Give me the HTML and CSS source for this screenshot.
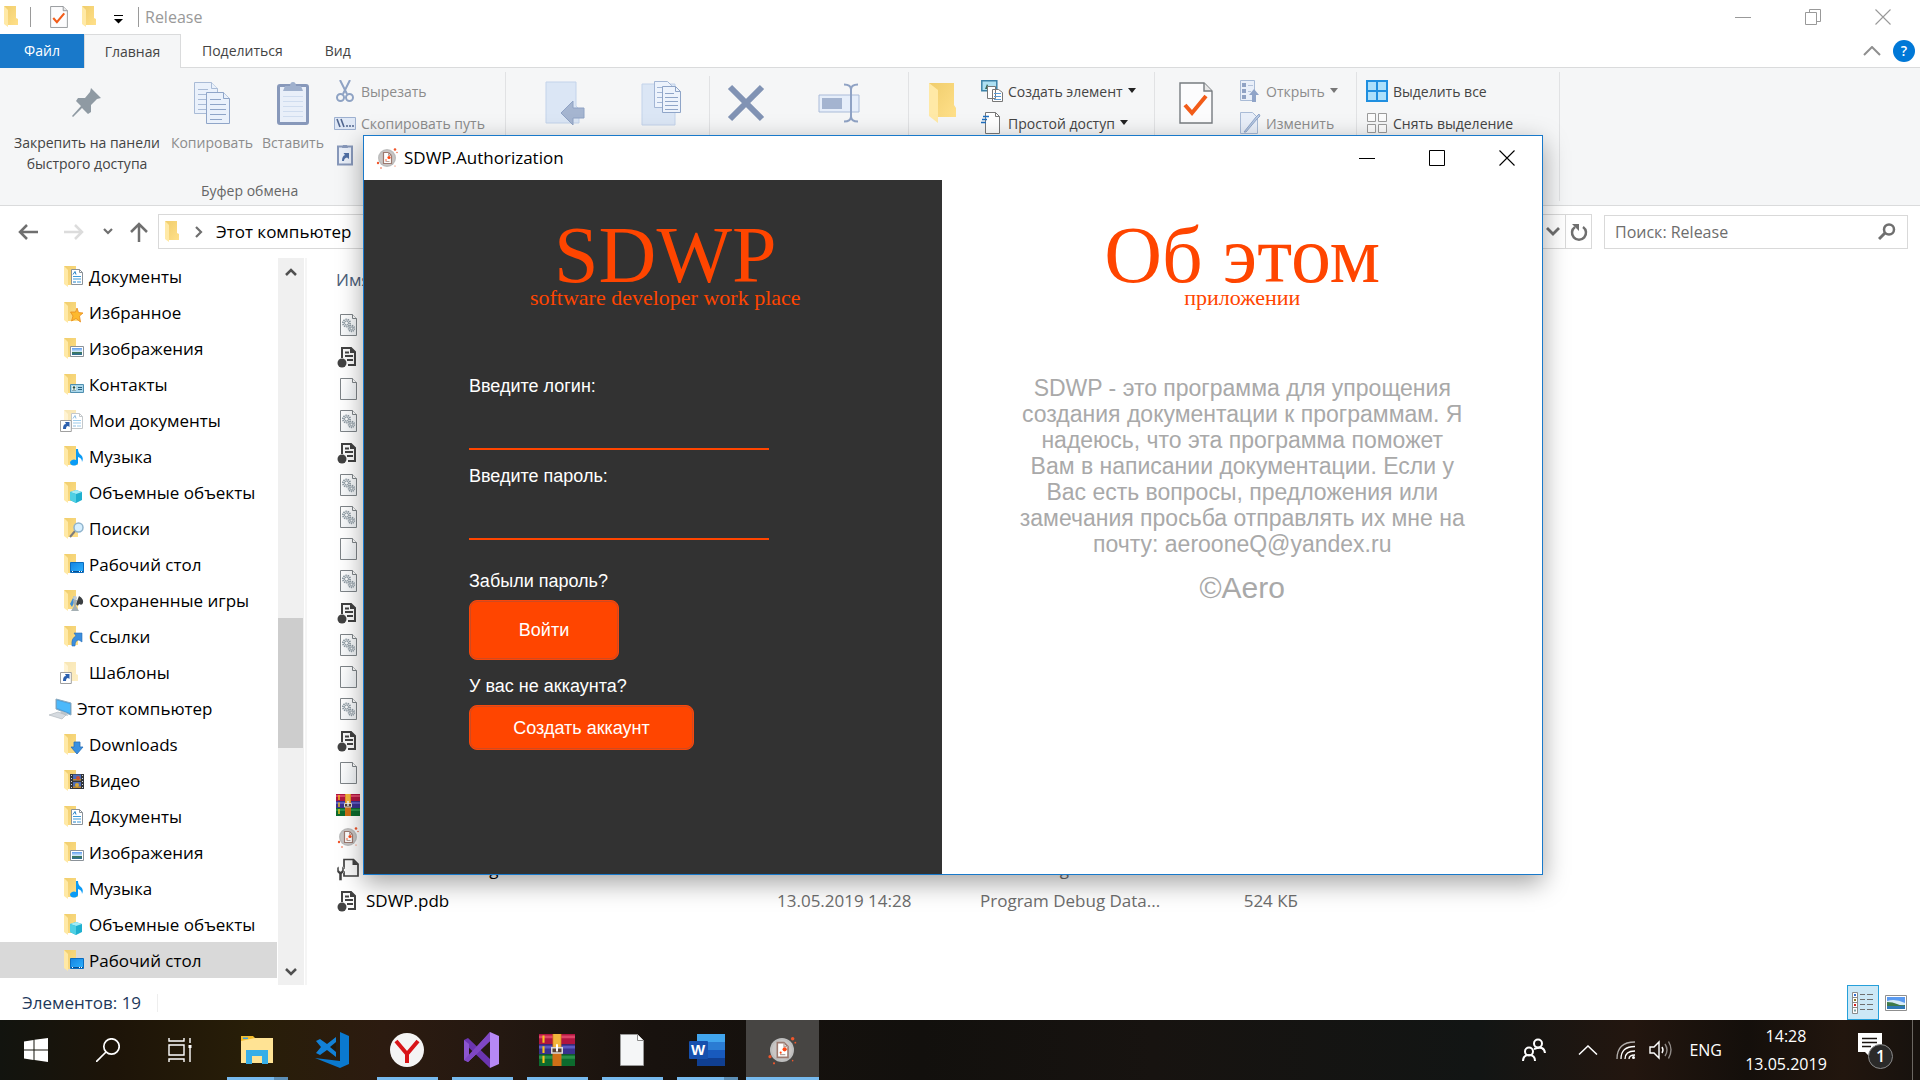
FILE: index.html
```html
<!DOCTYPE html>
<html lang="ru">
<head>
<meta charset="utf-8">
<title>SDWP.Authorization</title>
<link rel="stylesheet" href="styles.css">
</head>
<body>
<svg class="sprite" aria-hidden="true">
  <defs>
    <linearGradient id="gold" x1="0" x2="1" y1="0" y2="1"><stop offset="0" stop-color="#f0cd6c"/><stop offset="1" stop-color="#ffe08a"/></linearGradient>
    <linearGradient id="sky" x1="0" x2="0" y1="0" y2="1"><stop offset="0" stop-color="#5b9bf0"/><stop offset=".5" stop-color="#cfe6f7"/><stop offset=".55" stop-color="#3f7a4a"/><stop offset="1" stop-color="#2f6fa0"/></linearGradient>
    <linearGradient id="screen" x1="0" x2="1" y1="0" y2="1"><stop offset="0" stop-color="#1583e0"/><stop offset="1" stop-color="#2db3ff"/></linearGradient>
    <linearGradient id="paper" x1="0" x2="1" y1="0" y2="1"><stop offset="0" stop-color="#ffffff"/><stop offset="1" stop-color="#eef2f5"/></linearGradient>
    <symbol id="folder" viewBox="0 0 24 24"><path d="M4 1h12v12l2 1v6H8z" fill="url(#gold)"/><path d="M4 1l4 4v17l-4-3z" fill="#ffe9a6"/></symbol>
    <symbol id="doc" viewBox="0 0 24 24"><path d="M11.500 4.500h8l3 3v12h-11z" fill="#fff" stroke="#8b9299"/><path d="M19.500 4.500v3h3" fill="none" stroke="#8b9299"/><path d="M13 11.500h8M13 14h8M17 17h4" stroke="#3f9bd8"/><path d="M13 9.500l2-3 1 3M13 17h3" stroke="#1f7ec4" fill="none"/></symbol>
    <symbol id="star" viewBox="0 0 24 24"><path d="M17 7l1.500 4.500 4.500.5-3.500 3 1 6-4.500-3.500-4.500 2.500 1.500-5-2.500-4h5z" fill="#fdb92e" stroke="#e88b1c" stroke-width=".8"/></symbol>
    <symbol id="image" viewBox="0 0 24 24"><path d="M10.500 9.500h13v10h-13z" fill="#fff" stroke="#8b9299"/><path d="M12 11h10v7H12z" fill="url(#sky)"/></symbol>
    <symbol id="contact" viewBox="0 0 24 24"><path d="M10.500 11.500h13v8h-13z" fill="#a9d6ea" stroke="#4f8fb0"/><path d="M12 13h4v5h-4z" fill="#e9f4e8"/><circle cx="14" cy="14.500" r="1.200" fill="#2a4f4a"/><path d="M12.500 18q1.500-3 3 0M18 14.500h4M18 16.500h4" stroke="#2a5f7a" fill="none"/></symbol>
    <symbol id="note" viewBox="0 0 24 24"><path d="M16 4h2q0 4 3 6 3 3 1 7 0-4-4-5v6a4 3 0 1 1-2-3z" fill="#0a9bf5"/></symbol>
    <symbol id="cube" viewBox="0 0 24 24"><path d="M16 9l6 2v8l-6 3-6-3v-8z" fill="#1fb0cf"/><path d="M16 9l6 2-6 2-6-2z" fill="#a4ecf5"/><path d="M10 11l6 2v9l-6-3z" fill="#4fd0e4"/></symbol>
    <symbol id="lens" viewBox="0 0 24 24"><path d="M10 20l5-6" stroke="#7d7d7d" stroke-width="2"/><circle cx="18.500" cy="10.500" r="4.500" fill="#d6efff" stroke="#8fb3cc" stroke-width="1.500"/></symbol>
    <symbol id="desktop" viewBox="0 0 24 24"><path d="M10.500 9.500h13v10h-13z" fill="url(#screen)" stroke="#0b6cbf"/><path d="M11 18.500h12" stroke="#0a4f90"/><path d="M12 18.500h1m6 0h1m1 0h1" stroke="#fff"/></symbol>
    <symbol id="games" viewBox="0 0 24 24"><path d="M10 15l4-8 2 2-4 9z" fill="#3f8fd8"/><path d="M19 7q5 3 4 7-1 3-4 1-1 3-3 0z" fill="#3c4043"/><circle cx="15" cy="9" r="2" fill="#c5cdd0"/><path d="M13 11h4l-1 6 3 5h-8l3-5z" fill="#a4afb3"/></symbol>
    <symbol id="link" viewBox="0 0 24 24"><path d="M12 21q-1-8 4-10l-2-3h8v9l-3-2q-4 0-4 6z" fill="#3b8ede" stroke="#2a6fb5" stroke-width=".6"/></symbol>
    <symbol id="down" viewBox="0 0 24 24"><path d="M14 9h6v5h3l-6 7-6-7h3z" fill="#3a90e0" stroke="#2a70b8" stroke-width=".8"/></symbol>
    <symbol id="film" viewBox="0 0 24 24"><path d="M10 5h14v15H10z" fill="#33363a"/><path d="M13 5.500h8v6h-8zM13 13h8v6h-8z" fill="#4c6cb8"/><path d="M13 10h8v1.500h-8zM13 17.500h8V19h-8z" fill="#c28a2a"/><circle cx="18" cy="9" r="2" fill="#c94f35"/><circle cx="17" cy="16" r="2" fill="#d6a838"/><path d="M11.500 6v13M22.500 6v13" stroke="#d8d8d8" stroke-dasharray="1 2"/></symbol>
    <symbol id="shortcut" viewBox="0 0 24 24"><path d="M.5 11.500h10.800v11H.5z" fill="#fff" stroke="#a0a0a0"/><path d="M3 20q0-5 3-5l-1-2h4.500v5l-1.500-1q-2 0-2 3z" fill="#2b5fae"/></symbol>
    <symbol id="computer" viewBox="0 0 24 24"><path d="M8 2l15 4v12L8 12z" fill="#4a9fdd" stroke="#8aa9bd"/><path d="M9 3.500l13 3.500v9L9 11z" fill="#4cb9fb"/><path d="M13 14l6 2 1 3-8-2z" fill="#bcc6cd"/><path d="M1 18l9-3 8 3-4 4z" fill="#d6dbe0" stroke="#a9b2b8" stroke-width=".6"/></symbol>
    <symbol id="f-blank" viewBox="0 0 24 24"><path d="M4.500 1.500h12l4 4v17h-16z" fill="url(#paper)" stroke="#7e8488"/><path d="M16.500 1.500v4h4" fill="#fff" stroke="#7e8488"/></symbol>
    <symbol id="f-gear" viewBox="0 0 24 24"><use href="#f-blank"/><g fill="none" stroke="#8d9aa3"><circle cx="10.500" cy="10" r="3.600" stroke-width="1.800" stroke-dasharray="1.400 .8"/><circle cx="10.500" cy="10" r="2"/><circle cx="15.500" cy="15.500" r="2.800" stroke-width="1.800" stroke-dasharray="1.200 .7"/><circle cx="15.500" cy="15.500" r="1.300"/></g></symbol>
    <symbol id="f-pdb" viewBox="0 0 24 24"><path d="M6 13V3h9l4 4v13h-7" fill="#fafafa" stroke="#424242" stroke-width="2"/><path d="M14 2l6 6h-6z" fill="#424242"/><path d="M9 7.500h4M9 11h8M11 15h6" stroke="#424242" stroke-width="2"/><circle cx="6" cy="18" r="4.500" fill="#424242"/></symbol>
    <symbol id="f-config" viewBox="0 0 24 24"><path d="M8 12V2.500h9.500L22 7v12H8v-5" fill="#fafafa" stroke="#424242" stroke-width="1.700"/><path d="M16.500 2l6 6h-6z" fill="#424242"/><path d="M1 10.500l2-1v4l1.500 1L6 13.500v-4l2 1v4.500L6 17v6.500H3V17l-2-2z" fill="#424242" stroke="#fafafa" stroke-width=".5"/></symbol>
    <symbol id="rar" viewBox="0 0 24 24"><path d="M0 1h24v7H0z" fill="#b01540"/><path d="M0 2h24v2H0z" fill="#dc4468"/><path d="M0 8h24v7H0z" fill="#39318f"/><path d="M0 9h24v2H0z" fill="#5d5ac0"/><path d="M0 15h24v8H0z" fill="#0c6b2e"/><path d="M0 16h24v2H0z" fill="#2a9049"/><path d="M3 2v5M3 9.500v4.500M3 16v5" stroke="#f7c41c" stroke-width="1.400"/><path d="M9 1h6v22H9z" fill="#cf6f17"/><path d="M9.500 1h5v9h-5z" fill="#f2b63c"/><path d="M8.500 10.500h7V14h-7z" fill="#5a4030" stroke="#d8d8d8"/><path d="M12 8v5" stroke="#fff" stroke-width="1.300"/></symbol>
    <symbol id="sdwp" viewBox="0 0 24 24"><circle cx="12" cy="12" r="9" fill="#bdbdbd"/><circle cx="12" cy="12" r="7.500" fill="#c9c6c5"/><path d="M8.500 6.500h5l3 3v8h-8z" fill="#fff" stroke="#9c7a70" stroke-width="1.200"/><path d="M13.500 6.500v3h3M10.500 15.500h4" stroke="#b6a49e" fill="none"/><circle cx="14" cy="11.500" r="1.600" fill="#ff4713"/><circle cx="11" cy="14" r=".8" fill="#ff4713"/><circle cx="20" cy="3.500" r="1.300" fill="#f0562c"/><circle cx="22" cy="6.500" r=".7" fill="#f0562c"/><circle cx="3" cy="17" r="1.200" fill="#f0562c"/><circle cx="6" cy="22" r=".8" fill="#f0562c"/><circle cx="20" cy="20" r=".6" fill="#f0562c"/></symbol>
    <symbol id="checkdoc" viewBox="0 0 34 42"><path d="M1 1h24l8 8v32H1z" fill="#fcfcfd" stroke="#777c80" stroke-width="1.400"/><path d="M25 1v8h8" fill="#e8e8e8" stroke="#777c80" stroke-width="1.400"/><path d="M6 23l7 8 14-17" fill="none" stroke="#f25c19" stroke-width="4"/></symbol>
    <symbol id="caret" viewBox="0 0 8 5"><path d="M0 0h8L4 5z" fill="currentColor"/></symbol>
    <symbol id="minus" viewBox="0 0 16 16"><path d="M0 8.500h16" stroke="currentColor"/></symbol>
    <symbol id="cross" viewBox="0 0 16 16"><path d="M.5.5l15 15M15.500.5l-15 15" stroke="currentColor" stroke-width="1.100"/></symbol>
  </defs>
</svg>

<main class="explorer">
  <header class="titlebar">
    <svg class="i24"><use href="#folder"/></svg>
    <span class="rule"></span>
    <button class="bare" aria-label="Свойства"><svg class="quick"><use href="#checkdoc"/></svg></button>
    <button class="bare" aria-label="Новая папка"><svg class="i24"><use href="#folder"/></svg></button>
    <button class="bare quick-menu" aria-label="Настройка панели"><svg width="9" height="9" viewBox="0 0 9 9"><path d="M0 .5h9" stroke="#000"/><path d="M0 4h9L4.500 8.500z"/></svg></button>
    <span class="rule"></span>
    <span class="wintitle">Release</span>
    <span class="controls grey">
      <button class="bare" aria-label="Свернуть"><svg class="i16"><use href="#minus"/></svg></button>
      <button class="bare" aria-label="Восстановить"><svg class="i16" viewBox="0 0 16 16" fill="none" stroke="currentColor"><path d="M.5 3.500h11v12H.5zM4.500 3V.5h11v12h-3.500"/></svg></button>
      <button class="bare" aria-label="Закрыть"><svg class="i16"><use href="#cross"/></svg></button>
    </span>
  </header>

  <nav class="tabs">
    <button class="tab file">Файл</button>
    <button class="tab active">Главная</button>
    <button class="tab share">Поделиться</button>
    <button class="tab view">Вид</button>
    <span class="help">
      <button class="bare" aria-label="Свернуть ленту"><svg width="18" height="10" viewBox="0 0 18 10"><path d="M1 9l8-8 8 8" fill="none" stroke="#8f8f8f" stroke-width="2"/></svg></button>
      <button class="question" aria-label="Справка">?</button>
    </span>
  </nav>

  <section class="ribbon">
    <div class="group clipboard">
      <div class="tools">
        <button class="big pin"><svg width="32" height="44" viewBox="0 0 32 44"><path d="M20 7l10 10-4 1-6 6v7l-3 2-6-6-9 9-1-1 9-10-5-5 2-3h7l5-6z" fill="#8f9aa3"/></svg><span>Закрепить на панели<br>быстрого доступа</span></button>
        <button class="big copy off"><svg width="38" height="44" viewBox="0 0 38 44"><g fill="#eaf1fb" stroke="#a9bbd6"><path d="M1.500 1.500h17l6 6v25h-23z"/><path d="M18.500 1.500v6h6M5 8.500h10M5 13.500h12M5 18.500h10M5 23.500h8M5 28.500h8"/></g><g fill="#eaf1fb" stroke="#8fa5c8"><path d="M13.500 11.500h17l6 6v25h-23z"/><path d="M30.500 11.500v6h6M17 18.500h11M17 23.500h16M17 28.500h16M17 33.500h16M17 38.500h12"/></g></svg><span>Копировать</span></button>
        <button class="big paste off"><svg width="32" height="44" viewBox="0 0 32 44"><rect x="1.500" y="4.500" width="29" height="38" rx="1.500" fill="#e9eff9" stroke="#8798ba" stroke-width="3"/><path d="M6 15.500h20M6 20.500h20M6 25.500h20M6 30.500h20M6 35.500h20" stroke="#cfdcef"/><path d="M6 10l2-5h5q0-4 3-4t3 4h5l2 5z" fill="#9fb0cd"/></svg><span>Вставить</span></button>
        <div class="stack">
          <button class="small off"><svg class="i22" viewBox="0 0 22 22" fill="none" stroke="#8fa3c4" stroke-width="2"><path d="M6 0l7 14M16 0L9 14"/><circle cx="6.500" cy="17.500" r="3.500"/><circle cx="15.500" cy="17.500" r="3.500"/></svg>Вырезать</button>
          <button class="small off"><svg class="i22" viewBox="0 0 22 22"><path d="M.5 5.500h21v12H.5z" fill="#dfe8f6" stroke="#9db0d0"/><path d="M3 7l3 8M7 7l3 8M12 14h2M15 14h2M18 14h2" stroke="#51668f" stroke-width="1.600"/></svg>Скопировать путь</button>
          <button class="small off" aria-label="Вставить ярлык"><svg class="i22" viewBox="0 0 22 22"><path d="M4 2.500h14v18H4z" fill="#e9eff9" stroke="#8798ba" stroke-width="2"/><path d="M8 4l1-3h4l1 3z" fill="#8798ba"/><path d="M8 17q0-5 3-6L9.500 9H15v6l-2-1.500q-3 .5-3 3.500z" fill="#4f6fa5"/></svg></button>
        </div>
      </div>
      <span class="caption">Буфер обмена</span>
    </div>
    <div class="group organize">
      <button class="bare pic" aria-label="Переместить в"><svg width="40" height="44" viewBox="0 0 40 44"><path d="M1 1h30v24l3 3v14H1z" fill="#dbe6f5" stroke="#c3d3ea"/><path d="M16 32l12-12v7h11v10H28v7z" fill="#a5b5d0" stroke="#8fa2c4"/></svg></button>
      <button class="bare pic" aria-label="Копировать в"><svg width="40" height="46" viewBox="0 0 40 46"><path d="M1 4h33v41H1z" fill="#dbe6f5" stroke="#c3d3ea"/><path d="M13.500 1.500h13l4 4v22h-17z" fill="#edf3fc" stroke="#a3b6d5"/><path d="M16 7.500h6M16 12.500h6M16 17.500h6M16 22.500h6" stroke="#a3b6d5"/><path d="M21.500 6.500h13l5 5v21h-18z" fill="#edf3fc" stroke="#8fa5c8"/><path d="M34.500 6.500v5h5M24 13.500h9M24 17.500h13M24 21.500h13M24 25.500h13M24 29.500h13" stroke="#8fa5c8" fill="none"/></svg></button>
      <span class="vr"></span>
      <button class="bare pic del" aria-label="Удалить"><svg width="38" height="38" viewBox="0 0 38 38"><path d="M3 3l32 32M35 3L3 35" stroke="#8193b4" stroke-width="6"/></svg></button>
      <button class="bare pic ren" aria-label="Переименовать"><svg width="42" height="40" viewBox="0 0 42 40"><path d="M1 12h40v17H1z" fill="#e6eefa" stroke="#aabbd8"/><path d="M4 15h20v11H4z" fill="#a4b4d0"/><path d="M26 1.500q7 0 7 5v27q0 5-7 5M40 1.500q-7 0-7 5M33 33.500q0 5 7 5" fill="none" stroke="#8fa2c4" stroke-width="2"/></svg></button>
    </div>
    <div class="group create">
      <button class="bare pic" aria-label="Новая папка"><svg width="30" height="42" viewBox="0 0 30 42"><path d="M1 1h25v22l2 3v9H10z" fill="url(#gold)"/><path d="M1 1l9 7v33l-9-7z" fill="#ffe9a6"/></svg></button>
      <div class="stack">
        <button class="small"><svg class="i22" viewBox="0 0 22 22"><path d="M.8.8h15v10H.8z" fill="#aee0f2" stroke="#3d82a8" stroke-width="1.500"/><path d="M4 9l2-5 3 5z" fill="#3a6a5c"/><path d="M6.500 6.500h8v12h-8zM11.500 9.500h6l4 3v9h-10z" fill="#fff" stroke="#777"/><path d="M13 13.500h7M13 16.500h7M13 19.500h7" stroke="#5a9bd5"/></svg>Создать элемент<svg class="caret"><use href="#caret"/></svg></button>
        <button class="small"><svg class="i22" viewBox="0 0 22 22"><path d="M4.500.5h10l4 4v17h-14z" fill="#fff" stroke="#777"/><path d="M14.500.5v4h4" fill="none" stroke="#777"/><path d="M2 4.500h6M1 7.500h5M0 10.500h5" stroke="#1f6fc0" stroke-width="1.500"/></svg>Простой доступ<svg class="caret"><use href="#caret"/></svg></button>
      </div>
    </div>
    <div class="group open">
      <button class="bare pic" aria-label="Свойства"><svg width="34" height="42"><use href="#checkdoc"/></svg></button>
      <div class="stack">
        <button class="small off"><svg class="i22" viewBox="0 0 22 22"><path d="M1.500.5h14v20h-14z" fill="#e9eff9" stroke="#a9bbd6"/><path d="M3 3h4v4H3zM3 9h4v4H3zM3 15h4v4H3z" fill="#8fa2c4"/><path d="M9 5.500h5M9 11.500h3" stroke="#b5c4dc"/><path d="M15 9l5 6h-3v7h-4v-7h-3z" fill="#90a4c8"/></svg>Открыть<svg class="caret"><use href="#caret"/></svg></button>
        <button class="small off"><svg class="i22" viewBox="0 0 22 22"><path d="M1.500.5h12l5 5v16h-17z" fill="#e9eff9" stroke="#a9bbd6"/><path d="M5 20L17 5l3-3 1 2-3 3L7 20z" fill="#b9cae4" stroke="#8fa5c8"/></svg>Изменить</button>
      </div>
    </div>
    <div class="group select">
      <div class="stack">
        <button class="small"><svg class="i22" viewBox="0 0 22 22"><path d="M1 1h20v20H1zM11 1v20M1 11h20" fill="#ace0fb" stroke="#1f8fe0" stroke-width="2"/></svg>Выделить все</button>
        <button class="small"><svg class="i22" viewBox="0 0 22 22"><path d="M1.500 1.500h8v8h-8zM12.500 1.500h8v8h-8zM1.500 12.500h8v8h-8zM12.500 12.500h8v8h-8z" fill="#fcfcfc" stroke="#9b9b9b"/></svg>Снять выделение</button>
      </div>
    </div>
  </section>

  <section class="address">
    <button class="bare nav" aria-label="Назад"><svg width="20" height="18" viewBox="0 0 20 18"><path d="M9 2L2 9l7 7M2 9h18" fill="none" stroke="#6f6f6f" stroke-width="2.500"/></svg></button>
    <button class="bare nav" aria-label="Вперёд"><svg width="20" height="18" viewBox="0 0 20 18"><path d="M11 2l7 7-7 7M18 9H0" fill="none" stroke="#dcdcdc" stroke-width="2.500"/></svg></button>
    <button class="bare recent" aria-label="Последние"><svg width="10" height="8" viewBox="0 0 10 8"><path d="M1 1l4 4 4-4" fill="none" stroke="#6f6f6f" stroke-width="2.200"/></svg></button>
    <button class="bare up" aria-label="Вверх"><svg width="18" height="20" viewBox="0 0 18 20"><path d="M1 10l8-8 8 8M9 2v18" fill="none" stroke="#6f6f6f" stroke-width="2.500"/></svg></button>
    <div class="path">
      <svg class="i24"><use href="#folder"/></svg>
      <svg class="sep" width="8" height="12" viewBox="0 0 8 12"><path d="M1 1l5 5-5 5" fill="none" stroke="#6f6f6f" stroke-width="2.200"/></svg>
      <a href="#pc">Этот компьютер</a>
      <button class="bare drop" aria-label="История"><svg width="14" height="10" viewBox="0 0 14 10"><path d="M1 1l6 6 6-6" fill="none" stroke="#6f6f6f" stroke-width="2.800"/></svg></button>
      <button class="bare refresh" aria-label="Обновить"><svg width="18" height="18" viewBox="0 0 18 18"><path d="M13 4a7 7 0 1 1-8 0" fill="none" stroke="#6f6f6f" stroke-width="2.500"/><path d="M2 1h7v7z" fill="#6f6f6f"/></svg></button>
    </div>
    <form class="search">
      <input type="text" placeholder="Поиск: Release" aria-label="Поиск">
      <svg width="18" height="18" viewBox="0 0 18 18"><circle cx="11" cy="6.500" r="5" fill="none" stroke="#6f6f6f" stroke-width="2.500"/><path d="M7 10l-6 6" stroke="#6f6f6f" stroke-width="3"/></svg>
    </form>
  </section>

  <div class="content">
    <ul class="tree">
      <li><svg class="i24"><use href="#folder"/><use href="#doc"/></svg>Документы</li>
      <li><svg class="i24"><use href="#folder"/><use href="#star"/></svg>Избранное</li>
      <li><svg class="i24"><use href="#folder"/><use href="#image"/></svg>Изображения</li>
      <li><svg class="i24"><use href="#folder"/><use href="#contact"/></svg>Контакты</li>
      <li><svg class="i24"><g opacity=".5"><use href="#folder"/><use href="#doc"/></g><use href="#shortcut"/></svg>Мои документы</li>
      <li><svg class="i24"><use href="#folder"/><use href="#note"/></svg>Музыка</li>
      <li><svg class="i24"><use href="#folder"/><use href="#cube"/></svg>Объемные объекты</li>
      <li><svg class="i24"><use href="#folder"/><use href="#lens"/></svg>Поиски</li>
      <li><svg class="i24"><use href="#folder"/><use href="#desktop"/></svg>Рабочий стол</li>
      <li><svg class="i24"><use href="#folder"/><use href="#games"/></svg>Сохраненные игры</li>
      <li><svg class="i24"><use href="#folder"/><use href="#link"/></svg>Ссылки</li>
      <li><svg class="i24"><g opacity=".5"><use href="#folder"/></g><use href="#shortcut"/></svg>Шаблоны</li>
      <li class="root"><svg class="i24"><use href="#computer"/></svg>Этот компьютер</li>
      <li><svg class="i24"><use href="#folder"/><use href="#down"/></svg>Downloads</li>
      <li><svg class="i24"><use href="#folder"/><use href="#film"/></svg>Видео</li>
      <li><svg class="i24"><use href="#folder"/><use href="#doc"/></svg>Документы</li>
      <li><svg class="i24"><use href="#folder"/><use href="#image"/></svg>Изображения</li>
      <li><svg class="i24"><use href="#folder"/><use href="#note"/></svg>Музыка</li>
      <li><svg class="i24"><use href="#folder"/><use href="#cube"/></svg>Объемные объекты</li>
      <li class="selected"><svg class="i24"><use href="#folder"/><use href="#desktop"/></svg>Рабочий стол</li>
    </ul>
    <div class="scroll">
      <svg width="12" height="10" viewBox="0 0 12 10"><path d="M1 8l5-5 5 5" fill="none" stroke="#505050" stroke-width="2.500"/></svg>
      <span class="thumb"></span>
      <svg width="12" height="10" viewBox="0 0 12 10"><path d="M1 2l5 5 5-5" fill="none" stroke="#505050" stroke-width="2.500"/></svg>
    </div>
    <div class="files">
      <table>
        <colgroup><col class="w-icon"><col class="w-name"><col class="w-date"><col class="w-type"><col class="w-size"></colgroup>
        <thead><tr><th colspan="5">Имя</th></tr></thead>
        <tbody>
          <tr><td><svg class="i24"><use href="#f-gear"/></svg></td></tr>
          <tr><td><svg class="i24"><use href="#f-pdb"/></svg></td></tr>
          <tr><td><svg class="i24"><use href="#f-blank"/></svg></td></tr>
          <tr><td><svg class="i24"><use href="#f-gear"/></svg></td></tr>
          <tr><td><svg class="i24"><use href="#f-pdb"/></svg></td></tr>
          <tr><td><svg class="i24"><use href="#f-gear"/></svg></td></tr>
          <tr><td><svg class="i24"><use href="#f-gear"/></svg></td></tr>
          <tr><td><svg class="i24"><use href="#f-blank"/></svg></td></tr>
          <tr><td><svg class="i24"><use href="#f-gear"/></svg></td></tr>
          <tr><td><svg class="i24"><use href="#f-pdb"/></svg></td></tr>
          <tr><td><svg class="i24"><use href="#f-gear"/></svg></td></tr>
          <tr><td><svg class="i24"><use href="#f-blank"/></svg></td></tr>
          <tr><td><svg class="i24"><use href="#f-gear"/></svg></td></tr>
          <tr><td><svg class="i24"><use href="#f-pdb"/></svg></td></tr>
          <tr><td><svg class="i24"><use href="#f-blank"/></svg></td></tr>
          <tr><td><svg class="i24"><use href="#rar"/></svg></td></tr>
          <tr><td><svg class="i24"><use href="#sdwp"/></svg></td></tr>
          <tr><td><svg class="i24"><use href="#f-config"/></svg></td><td class="c-name">SDWP.exe.config</td><td>31.12.2018 12:51</td><td>XML Configuration File</td><td class="c-size">1 КБ</td></tr>
          <tr><td><svg class="i24"><use href="#f-pdb"/></svg></td><td class="c-name">SDWP.pdb</td><td>13.05.2019 14:28</td><td>Program Debug Data...</td><td class="c-size">524 КБ</td></tr>
        </tbody>
      </table>
    </div>
  </div>

  <footer class="status">
    <span class="count">Элементов: 19</span>
    <span class="views">
      <button class="bare details" aria-label="Таблица"><svg width="22" height="22" viewBox="0 0 22 22"><path d="M.5.5h5v21h-5zM.5 5.500h5M.5 10.500h5M.5 15.500h5" fill="#fff" stroke="#8a8a8a"/><path d="M2 3h2" stroke="#2f6fd0" stroke-width="2"/><path d="M2 8h2" stroke="#8a7a2a" stroke-width="2"/><path d="M2 13h2" stroke="#d02020" stroke-width="2"/><path d="M2 18.500h2" stroke="#7aa0a0" stroke-width="2"/><path d="M8 2.500h5M15 2.500h6M8 7.500h5M15 7.500h6M8 12.500h5M15 12.500h6M8 17.500h5M15 17.500h6" stroke="#6f6f6f"/></svg></button>
      <button class="bare thumbs" aria-label="Эскизы"><svg width="22" height="16" viewBox="0 0 22 16"><path d="M.5.5h21v15H.5z" fill="#fff" stroke="#8f8f8f"/><path d="M2 2h18v12H2z" fill="#5a9af0"/><path d="M2 6q8-3 18 2v2H2z" fill="#d8ebf8"/><path d="M2 7q6 0 10 2t8 1v1H2z" fill="#3f7a4a"/><path d="M2 11h18v3H2z" fill="#2f78b5"/></svg></button>
    </span>
  </footer>
</main>

<section class="dialog" role="dialog" aria-labelledby="dlg-title">
  <header class="dialog-bar">
    <svg class="i24"><use href="#sdwp"/></svg>
    <span id="dlg-title">SDWP.Authorization</span>
    <span class="controls">
      <button class="bare" aria-label="Свернуть"><svg class="i16"><use href="#minus"/></svg></button>
      <button class="bare" aria-label="Развернуть"><svg class="i16" viewBox="0 0 16 16"><path d="M.5.5h15v15H.5z" fill="none" stroke="currentColor"/></svg></button>
      <button class="bare" aria-label="Закрыть"><svg class="i16"><use href="#cross"/></svg></button>
    </span>
  </header>
  <div class="dialog-body">
    <div class="login">
      <h1>SDWP</h1>
      <p class="sub">software developer work place</p>
      <form>
        <label for="login">Введите логин:</label>
        <input id="login" type="text">
        <label for="password">Введите пароль:</label>
        <input id="password" type="password">
        <a class="forgot" href="#forgot">Забыли пароль?</a>
        <button type="button" class="enter">Войти</button>
        <p class="noacc">У вас не аккаунта?</p>
        <button type="button" class="create-acc">Создать аккаунт</button>
      </form>
    </div>
    <div class="about">
      <h2>Об этом</h2>
      <p class="sub">приложении</p>
      <p class="text">SDWP - это программа для упрощения<br>создания документации к программам. Я<br>надеюсь, что эта программа поможет<br>Вам в написании документации. Если у<br>Вас есть вопросы, предложения или<br>замечания просьба отправлять их мне на<br>почту: aerooneQ@yandex.ru</p>
      <p class="copyright">©Aero</p>
    </div>
  </div>
</section>

<footer class="taskbar">
  <button class="sys" aria-label="Пуск"><svg width="24" height="24" viewBox="0 0 24 24" fill="#fff"><path d="M0 3.500L9.500 2v9.500H0zM10.500 1.800L24 0v11.500H10.500zM0 12.500h9.500V22L0 20.600zM10.500 12.500H24V24l-13.500-1.900z"/></svg></button>
  <button class="sys" aria-label="Поиск"><svg width="24" height="24" viewBox="0 0 24 24" fill="none" stroke="#fff" stroke-width="1.700"><circle cx="15.500" cy="8.500" r="7.700"/><path d="M10 14L0 24"/></svg></button>
  <button class="sys" aria-label="Представление задач"><svg width="24" height="24" viewBox="0 0 24 24" fill="none" stroke="#fff" stroke-width="1.400"><path d="M1 0v3h15V0M1 7h15v10H1zM1 24v-3h15v3M22 0v5M22 10v14"/><path d="M20.500 7h3v3h-3z" fill="#fff" stroke="none"/></svg></button>
  <span class="apps">
    <button class="app run more" aria-label="Проводник"><svg width="34" height="28" viewBox="0 0 34 28"><path d="M1 0h12l3 3v4H1z" fill="#f5bd2c"/><path d="M3 1.500h5v1.500H3z" fill="#3da0e0"/><path d="M1 5l14-3h18v25H1z" fill="#ffe394"/><path d="M6 28V14h22v14h-6v-8H12v8z" fill="#37aee8"/></svg></button>
    <button class="app" aria-label="VS Code"><svg width="36" height="36" viewBox="0 0 36 36"><path d="M26 0l9 4v28l-9 4L1 26l25 3z" fill="#0a79cf"/><path d="M22 5v20l-9-7-7 5-4-2 5-6-5-6 4-2 7 5z" fill="#1280d6"/><path d="M16 15l6-5v10z" fill="#20180e"/></svg></button>
    <button class="app run" aria-label="Яндекс Браузер"><svg width="34" height="34" viewBox="0 0 34 34"><circle cx="17" cy="17" r="17" fill="#f4f4f4"/><path d="M6 8l11 13L28 8M17 19v11" fill="none" stroke="#d81418" stroke-width="4"/></svg></button>
    <button class="app run" aria-label="Visual Studio"><svg width="36" height="36" viewBox="0 0 36 36"><path d="M26 0l9 4v28l-9 4z" fill="#b688f5"/><path d="M0 8l4-2 22 21v9L0 11z" fill="#6b35b0"/><path d="M26 0v9L4 30l-4-2V8l5 4v12z" fill="#8c55cf"/><path d="M26 0v9L4 30l-4-2z" fill="#7f47c4"/></svg></button>
    <button class="app run" aria-label="WinRAR"><svg width="36" height="32" viewBox="0 1 24 22" preserveAspectRatio="none"><use href="#rar" width="24" height="24"/></svg></button>
    <button class="app run" aria-label="Документ"><svg width="24" height="32" viewBox="0 0 24 32"><path d="M.5.5h17l6 6v25H.5z" fill="#f5f6f7" stroke="#999"/><path d="M17.500.5v6h6" fill="#fff" stroke="#888"/></svg></button>
    <button class="app run more" aria-label="Word"><svg width="36" height="34" viewBox="0 0 36 34"><path d="M8 1h28v8H8z" fill="#41a5ee"/><path d="M8 9h28v8H8z" fill="#2b7cd3"/><path d="M8 17h28v8H8z" fill="#185abd"/><path d="M8 25h28v8H8z" fill="#103f91"/><rect y="8" width="19" height="18" rx="1" fill="#1650ad"/><text x="9" y="22" class="w">W</text></svg></button>
    <button class="app run current" aria-label="SDWP"><svg width="32" height="32"><use href="#sdwp"/></svg></button>
  </span>
  <span class="tray">
    <button class="bare people" aria-label="Люди"><svg width="24" height="24" viewBox="0 0 24 24" fill="none" stroke="#fff" stroke-width="2"><circle cx="16" cy="5.500" r="4"/><circle cx="7" cy="13.500" r="4"/><path d="M1 23q0-6 6-6t6 6M12 11q10-4 11 4"/></svg></button>
    <button class="bare chev" aria-label="Скрытые значки"><svg width="20" height="10" viewBox="0 0 20 10"><path d="M1 9.500l9-8.500 9 8.500" fill="none" stroke="#fff" stroke-width="1.500"/></svg></button>
    <button class="bare wifi" aria-label="Сеть"><svg width="20" height="20" viewBox="0 0 20 20" fill="none" stroke="#fff" stroke-width="1.300"><path d="M1 19Q1 2 19 2" opacity=".65"/><path d="M5 19Q5 6.500 19 6.500"/><path d="M9 19q0-8 10-8"/><path d="M13 19q0-4 6-4"/><circle cx="17.500" cy="17.500" r="1.500" fill="#fff" stroke="none"/></svg></button>
    <button class="bare vol" aria-label="Громкость"><svg width="24" height="20" viewBox="0 0 24 20" fill="none" stroke="#fff" stroke-width="1.400"><path d="M1 7h4l5-5v16l-5-5H1z"/><path d="M13 7q2 3 0 6"/><path d="M16 4q4 6 0 12M19.500 1.500q5 8 0 17" opacity=".5"/></svg></button>
    <button class="bare lang">ENG</button>
    <span class="clock">14:28<br>13.05.2019</span>
    <button class="bare notes" aria-label="Уведомления"><svg width="38" height="38" viewBox="0 0 38 38"><path d="M1 2h24v19H13v5l-5-5H1z" fill="#fff"/><path d="M5 7.500h15M5 11.500h15M5 15.500h9" stroke="#1a1410" stroke-width="1.300"/></svg><span class="badge">1</span></button>
    <span class="peek"></span>
  </span>
</footer>
</body>
</html>
```
FILE: styles.css
```css
* { box-sizing: border-box; }

body {
  margin: 0;
  min-height: 100vh;
  display: flex;
  flex-direction: column;
  position: relative;
  background: #fff;
  color: #000;
  font: 17px/24px "Open Sans", "Noto Sans", sans-serif;
}

button, input { font: inherit; color: inherit; }
button { border: 0; background: none; padding: 0; }
svg { display: block; flex: none; }
p, h1, h2, ul { margin: 0; padding: 0; }
.sprite { width: 0; height: 0; position: absolute; }
.i24 { width: 24px; height: 24px; }
.i22 { width: 22px; height: 22px; }
.i16 { width: 16px; height: 16px; }
.bare { display: flex; align-items: center; justify-content: center; }

.explorer { flex: 1; display: flex; flex-direction: column; }

/* title bar */
.titlebar { height: 34px; display: flex; align-items: center; }
.rule { width: 1px; height: 20px; background: #9a9a9a; margin: 0 6px; }
.quick { width: 18px; height: 22px; margin: 0 10px 0 13px; }
.quick-menu { width: 16px; margin: 4px 6px 0 8px; }
.wintitle { color: #999; font-size: 16px; padding-bottom: 1px; }
.controls { margin-left: auto; display: flex; color: #000; }
.controls .bare { width: 70px; height: 32px; }
.controls.grey { color: #999; padding-right: 2px; }

/* ribbon tabs */
.tabs { height: 34px; display: flex; align-items: stretch; border-bottom: 1px solid #dadbdc; font-size: 14px; color: #444; }
.tab { padding: 0 21px; }
.file { width: 84px; padding: 0; background: #1979ca; color: #fff; margin-bottom: -1px; }
.active { width: 97px; padding: 0; background: #f5f6f7; border: solid #dadbdc; border-width: 1px 1px 0; margin-bottom: -1px; }
.help { margin-left: auto; display: flex; align-items: center; gap: 12px; padding-right: 5px; }
.question { width: 22px; height: 22px; border-radius: 50%; background: #0078d7; color: #fff; font-weight: 600; line-height: 20px; }

/* ribbon */
.ribbon { height: 138px; display: flex; background: #f5f6f7; border-bottom: 1px solid #dadbdc; font-size: 14px; line-height: 21px; color: #444; }
.ribbon button { color: inherit; white-space: nowrap; }
.ribbon .off { color: #8c8c8c; }
.group { display: flex; margin: 4px 0; border-right: 1px solid #e1e2e4; }
.tools { display: flex; }
.big { display: flex; flex-direction: column; align-items: center; gap: 7px; padding-top: 9px; justify-content: flex-start; }
.pin { width: 174px; }
.copy { width: 76px; }
.paste { width: 86px; }
.stack { display: flex; flex-direction: column; gap: 10px; padding-top: 8px; }
.small { display: flex; align-items: center; gap: 5px; height: 22px; }
.clipboard { width: 506px; flex-direction: column; justify-content: space-between; }
.clipboard .stack { margin-left: -2px; }
.caption { padding-left: 201px; line-height: 21px; color: #666; }
.organize { width: 403px; padding-left: 31px; align-items: flex-start; }
.pic { width: 56px; height: 62px; }
.organize .pic + .pic { margin-left: 40px; }
.vr { width: 1px; height: 100px; margin: 4px 0 0 20px; background: #e1e2e4; }
.del { margin-left: 8px; }
.organize .del + .ren { margin-left: 37px; }
.create { width: 246px; padding-left: 6px; }
.create .stack { margin-left: 10px; }
.open { width: 202px; padding-left: 13px; }
.open .stack { margin-left: 15px; }
.select { width: 203px; padding-left: 9px; }
.caret { width: 8px; height: 5px; margin-bottom: 2px; color: #222; }
.off .caret { color: #777; }

/* address bar */
.address { height: 50px; display: flex; align-items: center; padding: 1px 12px 0 13px; }
.nav { width: 30px; margin-right: 16px; }
.recent { width: 10px; margin-left: -2px; }
.up { width: 20px; margin: 0 9px 0 16px; }
.path { flex: 1; height: 35px; border: 1px solid #d9d9d9; display: flex; align-items: center; padding-left: 2px; }
.path a { color: #000; text-decoration: none; }
.path .sep { margin: 0 13px 0 10px; }
.drop { width: 25px; height: 33px; margin-left: auto; border-right: 1px solid #d9d9d9; }
.refresh { width: 25px; height: 33px; }
.search { width: 304px; height: 34px; margin-left: 12px; border: 1px solid #d9d9d9; display: flex; align-items: center; padding: 0 11px 0 10px; }
.search input { flex: 1; min-width: 0; border: 0; padding: 0; outline: 0; font-size: 16px; background: none; }
.search input::placeholder { color: #6d6d6d; opacity: 1; }

/* tree, scroll bar and file list */
.content { flex: 1; display: flex; padding-top: 2px; }
.tree { width: 277px; list-style: none; }
.tree li { height: 36px; display: flex; align-items: center; gap: 5px; padding: 2px 0 0 60px; white-space: nowrap; }
.tree .root { padding-left: 48px; }
.tree .selected { background: #d9d9d9; }
.scroll { width: 26px; margin-left: 1px; background: #f0f0f0; display: flex; flex-direction: column; align-items: center; justify-content: space-between; padding: 9px 0 8px; }
.thumb { align-self: stretch; height: 130px; background: #cdcdcd; margin: 262px 1px 0 0; }
.scroll svg:last-child { margin-top: 140px; }
.files { flex: 1; margin-left: 1px; border-left: 2px solid #f5f5f5; padding-left: 29px; }
table { border-collapse: collapse; table-layout: fixed; width: 962px; }
td, th { padding: 0; height: 32px; font-weight: 400; text-align: left; color: #6d6d6d; white-space: nowrap; }
td { padding-top: 1px; }
th { height: 50px; color: #4c607a; padding-bottom: 6px; }
.w-icon { width: 30px; }
.w-name { width: 411px; }
.w-date { width: 203px; }
.w-type { width: 206px; }
.w-size { width: 112px; }
.c-name { color: #000; }
.c-size { text-align: right; }

/* status bar */
.status { height: 35px; display: flex; align-items: center; justify-content: space-between; color: #1e395b; }
.count { margin-left: 22px; padding-right: 16px; border-right: 1px solid #eee; line-height: 18px; }
.views { display: flex; align-items: center; gap: 6px; padding-right: 13px; }
.details { width: 32px; height: 35px; background: #cce8f6; border: 1px solid #26a0da; }

/* authorization window */
.dialog { position: absolute; left: 363px; right: 377px; top: 135px; border: 1px solid #1979ca; background: #fff; box-shadow: 0 8px 24px rgba(0, 0, 0, .36); }
.dialog-bar { height: 44px; display: flex; align-items: center; padding-left: 11px; gap: 5px; font-size: 17px; }
.dialog-bar .controls .bare { height: 44px; }
.dialog-body { display: flex; align-items: stretch; min-height: 694px; font-family: "Liberation Sans", Arial, sans-serif; }
.login { flex: 578; background: #323232; color: #fff; padding: 29px 0 100px; }
.about { flex: 599; padding-top: 29px; text-align: center; color: #a9a9a9; }
h1, h2, .sub { font-family: "Liberation Serif", "Times New Roman", serif; font-weight: 400; color: #ff4500; text-align: center; }
h1, h2 { font-size: 80px; line-height: 92px; }
h1 { padding-left: 24px; }
.sub { font-size: 22px; line-height: 26px; margin-top: -16px; }
.login .sub { padding-left: 24px; }
.login form { display: flex; flex-direction: column; align-items: flex-start; padding: 64px 0 0 105px; font-size: 18px; line-height: 22px; }
.login input { width: 300px; height: 53px; border: 0; border-bottom: 2px solid #ff4500; background: none; outline: 0; padding: 20px 0 0; margin-bottom: 15px; }
.forgot { color: #fff; text-decoration: none; margin: 15px 0 8px; }
.login form button { background: #ff4500; border-radius: 8px; border: 1px solid #f9470a; box-shadow: inset 0 0 0 1px #d04a20; color: #fff; }
.enter { width: 150px; height: 60px; }
.noacc { margin: 15px 0 8px; }
.create-acc { width: 225px; height: 45px; }
.text { font-size: 23px; line-height: 26px; margin-top: 64px; }
.copyright { font-size: 30px; line-height: 36px; margin-top: 13px; }

/* taskbar */
.taskbar { height: 60px; display: flex; color: #fff; background: linear-gradient(90deg, #12140f 0, #1d1408 6%, #281e08 13%, #2c1b10 20%, #241811 26%, #18120e 34%, #12100d 48%, #171310 60%, #121514 77%, #23160f 85%, #140f0b 91%, #22160e 96%, #17120e 100%); }
.sys { width: 72px; display: flex; align-items: center; justify-content: center; }
.apps { display: flex; margin-left: 4px; }
.app { width: 73px; margin: 0 1px; display: flex; align-items: center; justify-content: center; border-bottom: 3px solid transparent; padding: 3px 1px 0 0; }
.run { width: 61px; margin: 0 7px; border-bottom-color: #76b9ed; }
.more { border-image: linear-gradient(90deg, #76b9ed 47px, #5c8eb5 47px) 0 0 3 0; }
.current { width: 73px; margin: 0 1px; background: #474543; }
.w { font: 700 15px "Liberation Sans", sans-serif; fill: #fff; text-anchor: middle; }
.tray { margin-left: auto; display: flex; align-items: center; }
.chev { margin-left: 32px; }
.wifi { margin-left: 18px; }
.vol { margin-left: 13px; }
.lang { margin-left: 16px; font-size: 16px; }
.clock { width: 88px; margin-left: 20px; text-align: center; font-size: 16px; line-height: 28px; }
.notes { position: relative; margin-left: 27px; }
.badge { position: absolute; right: 2px; bottom: 0; width: 25px; height: 25px; border: 1px solid #8a8a8a; border-radius: 50%; background: #2b2a29; font-size: 16px; font-weight: 600; line-height: 22px; text-align: center; }
.peek { width: 1px; height: 60px; margin: 0 7px 0 17px; background: #6b6762; }
```
